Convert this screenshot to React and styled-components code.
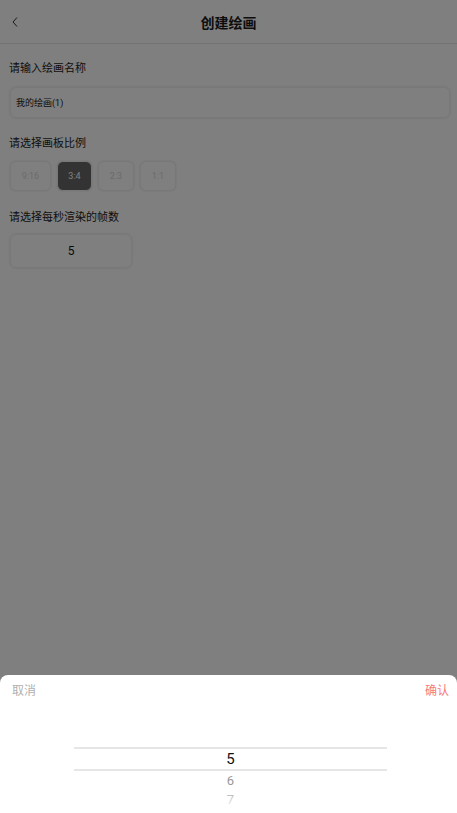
import React, { useState } from 'react'
import styled, { createGlobalStyle } from 'styled-components'

const GlobalStyle = createGlobalStyle`
  html, body {
    margin: 0;
    padding: 0;
    background: #fff;
    font-family: Roboto, "Noto Sans CJK SC", sans-serif;
  }
`

const Page = styled.div`
  width: 457px;
  height: 813px;
  position: relative;
  overflow: hidden;
  background: #fff;
  color: #222;
`

const Header = styled.header`
  height: 43px;
  display: flex;
  align-items: center;
  justify-content: center;
  position: relative;
  border-bottom: 1px solid #e4e4e4;
`

const Back = styled.button`
  position: absolute;
  left: 5px;
  top: 12px;
  width: 20px;
  height: 20px;
  border: 0;
  background: none;
  padding: 0;
  display: flex;
  align-items: center;
  justify-content: center;
`

const Title = styled.h1`
  margin: 0;
  font-size: 14px;
  font-weight: 700;
  color: #1a1a1a;
`

const Body = styled.main`
  padding: 17px 7px 0 9px;
  display: flex;
  flex-direction: column;
`

const Label = styled.div`
  font-size: 11px;
  line-height: 16px;
  color: #1c1c1c;
  margin-bottom: 10px;
`

const Section = styled.section`
  margin-bottom: 18px;
  display: flex;
  flex-direction: column;
`

const NameInput = styled.div`
  margin-left: 1px;
  height: 29px;
  border-radius: 6px;
  box-shadow: 0 0 3px rgba(0, 0, 0, 0.12);
  border: 1px solid #f0f0f0;
  display: flex;
  align-items: center;
  padding-left: 5px;
  font-size: 9px;
  color: #222;
`

const Ratios = styled.div`
  display: flex;
  gap: 6px;
  margin-left: 1px;
  margin-top: -1px;
  margin-bottom: 1px;
`

const Ratio = styled.button`
  height: 30px;
  width: ${(p) => p.$w}px;
  border-radius: 6px;
  border: 1px solid #f0f0f0;
  box-shadow: 0 0 3px rgba(0, 0, 0, 0.1);
  background: ${(p) => (p.$active ? '#666' : '#fff')};
  color: ${(p) => (p.$active ? '#fff' : '#d6d6d6')};
  font-family: Roboto, sans-serif;
  font-size: 9px;
  padding: 0;
`

const FrameBox = styled.div`
  margin-left: 1px;
  margin-top: -2px;
  width: 120px;
  height: 32px;
  border-radius: 6px;
  border: 1px solid #f0f0f0;
  box-shadow: 0 0 3px rgba(0, 0, 0, 0.12);
  display: flex;
  align-items: center;
  justify-content: center;
  font-size: 12px;
  color: #111;
`

const Mask = styled.div`
  position: absolute;
  inset: 0;
  background: rgba(0, 0, 0, 0.5);
`

const Sheet = styled.div`
  position: absolute;
  left: 0;
  right: 0;
  bottom: 0;
  height: 138px;
  background: #fff;
  border-radius: 8px 8px 0 0;
  display: flex;
  flex-direction: column;
  overflow: hidden;
`

const SheetBar = styled.div`
  display: flex;
  justify-content: space-between;
  padding: 8px 8px 0 12px;
  font-size: 12px;
  line-height: 16px;
`

const Cancel = styled.span`
  color: #b0b0b0;
`

const Confirm = styled.span`
  color: #f77a7a;
`

const Wheel = styled.div`
  margin: 48px 70px 0 74px;
  display: flex;
  flex-direction: column;
  align-items: center;
  position: relative;
`

const Fade = styled.div`
  position: absolute;
  left: 0;
  right: 0;
  top: 44px;
  height: 30px;
  background: linear-gradient(rgba(255, 255, 255, 0), #fff 60%);
`

const Current = styled.div`
  width: 100%;
  height: 20px;
  border-top: 2px solid #e6e6e6;
  border-bottom: 2px solid #e6e6e6;
  display: flex;
  align-items: center;
  justify-content: center;
  font-size: 15px;
  color: #111;
`

const Option = styled.div`
  height: 19px;
  line-height: 19px;
  font-size: 13px;
  color: ${(p) => p.$c};
`

const ratios = [
  { label: '9:16', w: 41 },
  { label: '3:4', w: 35 },
  { label: '2:3', w: 36 },
  { label: '1:1', w: 36 },
]

export default function App() {
  const [active, setActive] = useState('3:4')
  return (
    <Page>
      <GlobalStyle />
      <Header>
        <Back>
          <svg width="10" height="14" viewBox="0 0 10 14">
            <path d="M7 2.5 L3 7 L7 11.5" fill="none" stroke="#333" strokeWidth="1" />
          </svg>
        </Back>
        <Title>创建绘画</Title>
      </Header>
      <Body>
        <Section>
          <Label>请输入绘画名称</Label>
          <NameInput>我的绘画(1)</NameInput>
        </Section>
        <Section>
          <Label>请选择画板比例</Label>
          <Ratios>
            {ratios.map((r) => (
              <Ratio
                key={r.label}
                $w={r.w}
                $active={active === r.label}
                onClick={() => setActive(r.label)}
              >
                {r.label}
              </Ratio>
            ))}
          </Ratios>
        </Section>
        <Section>
          <Label>请选择每秒渲染的帧数</Label>
          <FrameBox>5</FrameBox>
        </Section>
      </Body>
      <Mask />
      <Sheet>
        <SheetBar>
          <Cancel>取消</Cancel>
          <Confirm>确认</Confirm>
        </SheetBar>
        <Wheel>
          <Current>5</Current>
          <Option $c="#999">6</Option>
          <Option $c="#aaa">7</Option>
          <Fade />
        </Wheel>
      </Sheet>
    </Page>
  )
}
